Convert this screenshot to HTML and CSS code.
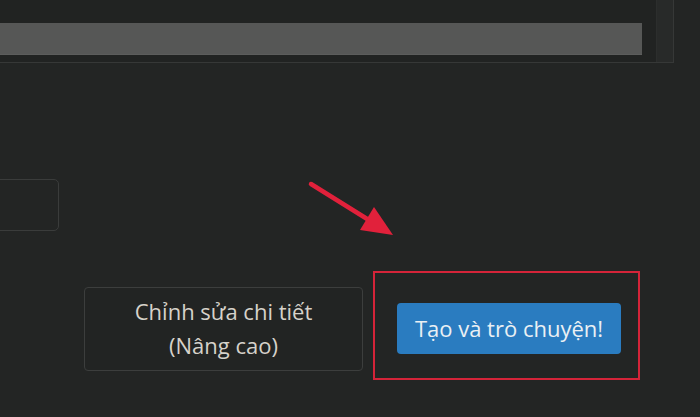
FILE: index.html
```html
<!DOCTYPE html>
<html lang="vi">
<head>
<meta charset="utf-8">
<link rel="stylesheet" href="styles.css">
</head>
<body>
<div class="page">
  <div class="panel">
    <div class="track"><div class="bar"></div></div>
    <div class="scroll"></div>
  </div>
  <div class="field-row"><div class="field"></div></div>
  <div class="actions">
    <button class="btn-secondary">Chỉnh sửa chi tiết<br>(Nâng cao)</button>
    <div class="highlight">
      <button class="btn-primary">Tạo và trò chuyện!</button>
    </div>
  </div>
  <svg class="arrow" width="700" height="417" viewBox="0 0 700 417">
    <line x1="311" y1="184" x2="372" y2="222" stroke="#e1213b" stroke-width="4.5" stroke-linecap="round"/>
    <polygon points="393,235 360,230 374,207" fill="#e1213b"/>
  </svg>
</div>
</body>
</html>
```
FILE: styles.css
```css
html, body {
  margin: 0;
  padding: 0;
  background: #232524;
  overflow: hidden;
}
.page {
  position: relative;
  width: 700px;
  height: 417px;
  font-family: "Open Sans", "Noto Sans", sans-serif;
}
.panel {
  display: flex;
  width: 673px;
  height: 62px;
  border-right: 1px solid #363837;
  border-bottom: 1px solid #363837;
  background: #212322;
}
.track {
  flex: 1;
  padding-top: 23px;
  padding-right: 14px;
}
.bar {
  height: 31px;
  background: #565756;
  border-bottom: 1px solid #5c5d5c;
}
.scroll {
  width: 16px;
  background: #282a29;
  border-left: 1px solid #2c2e2d;
}
.field-row {
  margin-top: 116px;
  height: 52px;
}
.field {
  margin-left: -12px;
  width: 69px;
  height: 50px;
  border: 1px solid #3a3c3b;
  border-radius: 5px;
}
.actions {
  display: flex;
  align-items: flex-start;
  margin-top: 40px;
  padding-left: 84px;
}
.btn-secondary {
  margin-top: 16px;
  width: 279px;
  height: 84px;
  background: #222423;
  border: 1px solid #3c3e3d;
  border-radius: 4px;
  color: #d6d2ca;
  font-family: inherit;
  font-size: 22px;
  line-height: 34px;
  padding: 0 0 2px;
}
.highlight {
  margin-left: 10px;
  width: 241px;
  height: 75px;
  border: 2px solid #d42439;
  padding: 30px 0 0 22px;
}
.btn-primary {
  width: 224px;
  height: 51px;
  background: #2a7cc0;
  border: none;
  border-radius: 4px;
  color: #eaf0f4;
  font-family: inherit;
  font-size: 22px;
  padding: 0 0 2px;
}
.arrow {
  position: absolute;
  left: 0;
  top: 0;
  pointer-events: none;
}
```
